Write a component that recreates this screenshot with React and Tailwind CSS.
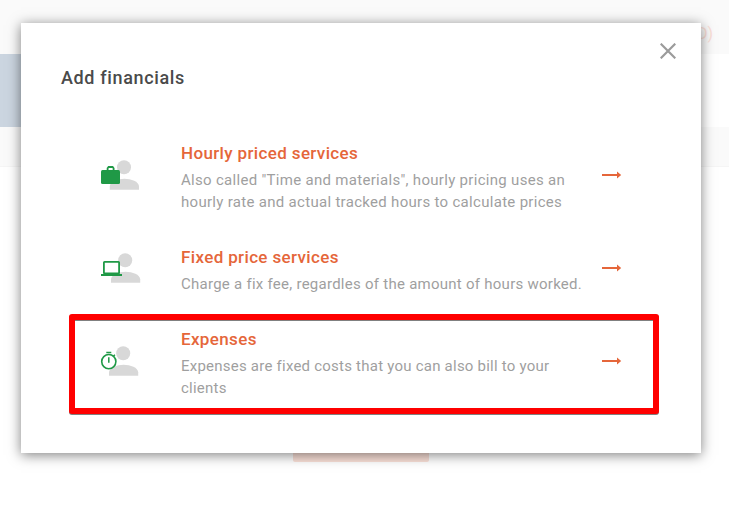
import React from 'react';

const Person = ({ dx = 0 }) => (
  <g fill="#d8d8d8" transform={`translate(${dx} 0)`}>
    <circle cx="24" cy="12.2" r="7" />
    <path d="M9.8 34.7v-3.4c0-4.8 8-7.6 14.6-7.6S39 26.500 39 31.300v3.400z" />
  </g>
);

const BriefcaseIcon = () => (
  <svg width="42" height="40" viewBox="0 0 42 40">
    <Person />
    <rect x="1" y="15" width="19" height="14" rx="1.500" fill="#1f9946" />
    <path d="M7.600 15.500v-2.200l1-1.300h4l1 1.300v2.200" fill="none" stroke="#1f9946" strokeWidth="1.800" />
  </svg>
);

const LaptopIcon = () => (
  <svg width="42" height="40" viewBox="0 0 42 40">
    <Person dx={1.2} />
    <rect x="3.900" y="13.900" width="15.200" height="11.400" rx="0.600" fill="#fff" stroke="#1f9946" strokeWidth="1.800" />
    <path d="M1 26h21v2H1z" fill="#1f9946" />
  </svg>
);

const StopwatchIcon = () => (
  <svg width="42" height="40" viewBox="0 0 42 40">
    <Person dx={-0.8} />
    <circle cx="8.800" cy="20.600" r="7.100" fill="#fff" stroke="#1f9946" strokeWidth="1.600" />
    <path d="M6.300 11.400h5M8.800 16.300v5.400M13.400 15.200l1.500-1.500" fill="none" stroke="#1f9946" strokeWidth="1.500" />
  </svg>
);

const Arrow = () => (
  <svg width="20" height="10" viewBox="0 0 20 10" fill="#e5663a">
    <path d="M0 4h15V1.500L19.200 5 15 8.500V6H0z" />
  </svg>
);

const options = [
  {
    icon: BriefcaseIcon,
    title: 'Hourly priced services',
    lines: [
      { text: 'Also called "Time and materials", hourly pricing uses an', className: 'tracking-[0.3px]' },
      { text: 'hourly rate and actual tracked hours to calculate prices', className: 'tracking-[0.3px]' },
    ],
  },
  {
    icon: LaptopIcon,
    title: 'Fixed price services',
    lines: [
      { text: 'Charge a fix fee, regardles of the amount of hours worked.', className: 'tracking-[0.26px]' },
    ],
  },
  {
    icon: StopwatchIcon,
    title: 'Expenses',
    lines: [
      { text: 'Expenses are fixed costs that you can also bill to your', className: 'tracking-[0.23px]' },
      { text: 'clients', className: 'tracking-[0.23px]' },
    ],
    highlighted: true,
  },
];

const Option = ({ icon: Icon, title, lines, highlighted }) => (
  <button className="relative flex w-full items-center text-left">
    {highlighted && (
      <span className="absolute -top-[14px] -left-[31px] h-[100px] w-[590px] rounded-[3px] border-[6px] border-[#ff0000] drop-shadow-[0_1px_0_#808080]" />
    )}
    <span className="mb-[5px] w-[81px] shrink-0">
      <Icon />
    </span>
    <span className="w-[421px] shrink-0 whitespace-nowrap">
      <span className="block text-[17px] leading-[22px] font-medium tracking-[0.36px] text-[#e5663a]">{title}</span>
      <span className="mt-[5px] block text-[15px] leading-[22px] text-[#9f9f9f]">
        {lines.map((line) => (
          <span key={line.text} className={`block ${line.className}`}>{line.text}</span>
        ))}
      </span>
    </span>
    <span className="mb-[5px] shrink-0">
      <Arrow />
    </span>
  </button>
);

const Backdrop = () => (
  <div className="flex h-full flex-col">
    <div className="flex h-[54px] items-start justify-end bg-[#fafafa] pt-[23px] pr-4 text-[16px] leading-[22px] text-[#fbe0d8]">
      (USD)
    </div>
    <div className="flex h-[73px]">
      <div className="w-[120px] bg-[#cbd5e0]" />
    </div>
    <div className="h-10 border-b border-[#f5f5f5] bg-[#fafafa]" />
    <div className="mt-[255px] ml-[293px] h-10 w-[136px] rounded-[2px] bg-[#fbe1d9]" />
  </div>
);

const App = () => (
  <div className="relative h-[505px] w-[729px] overflow-hidden bg-white font-['Roboto',sans-serif]">
    <Backdrop />
    <div className="absolute top-[23px] left-[21px] h-[430px] w-[680px] bg-white shadow-[0_2px_12px_rgba(0,0,0,0.5)]">
      <div className="flex items-start justify-between pt-5 pr-[25px] pl-10">
        <h2 className="mt-[23px] text-[18px] leading-6 font-medium tracking-[0.64px] text-[#4a4a4a]">Add financials</h2>
        <button className="block">
          <svg width="16" height="16" viewBox="0 0 16 16" stroke="#9b9b9b" strokeWidth="2.200">
            <path d="M0.700 0.700l14.600 14.600M15.300 0.700L0.700 15.300" />
          </svg>
        </button>
      </div>
      <div className="mt-[52px] flex flex-col gap-[33px] pl-[79px]">
        {options.map((option) => (
          <Option key={option.title} {...option} />
        ))}
      </div>
    </div>
  </div>
);

export default App;
